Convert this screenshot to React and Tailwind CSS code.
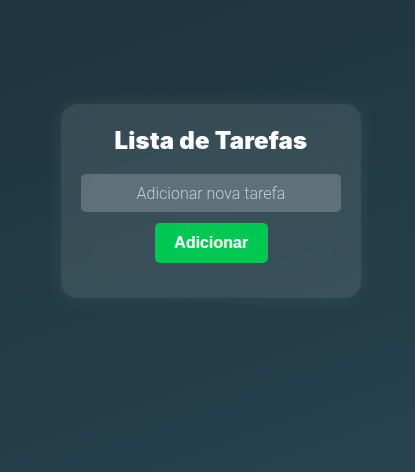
import React, { useState } from 'react';

const App = () => {
  const [tasks, setTasks] = useState([]);
  const [text, setText] = useState('');

  const handleAdd = () => {
    if (!text.trim()) return;
    setTasks([...tasks, text.trim()]);
    setText('');
  };

  return (
    <div className="min-h-screen w-full bg-[linear-gradient(160deg,#1f343e_0%,#223c47_55%,#26434f_100%)] pt-[104px] pl-[7px] font-['Roboto',sans-serif]">
      {/* Card */}
      <div className="mx-auto w-[300px] rounded-[16px] bg-white/10 px-5 pt-[19px] pb-[35px] text-center shadow-[0_0_18px_rgba(255,255,255,0.08)] backdrop-blur-md">
        <h2 className="mb-[15px] font-['Inter',sans-serif] text-[24px] leading-[36px] font-black tracking-[0.2px] text-white">
          Lista de Tarefas
        </h2>
        <input
          type="text"
          value={text}
          onChange={(e) => setText(e.target.value)}
          placeholder="Adicionar nova tarefa"
          className="block h-[38px] w-full rounded-[5px] bg-white/20 px-3 text-center text-[16px] font-light text-white outline-none placeholder:text-[#c4ccce]"
        />
        <button
          onClick={handleAdd}
          className="mt-[11px] h-[40px] w-[113px] rounded-[5px] bg-[#00c853] font-['Liberation_Sans',sans-serif] text-[16px] font-bold text-white"
        >
          Adicionar
        </button>
        {tasks.length > 0 && (
          <ul className="mt-4 space-y-2 text-left text-white">
            {tasks.map((t, i) => (
              <li key={i} className="rounded-[5px] bg-white/10 px-3 py-2">{t}</li>
            ))}
          </ul>
        )}
      </div>
    </div>
  );
};

export default App;
